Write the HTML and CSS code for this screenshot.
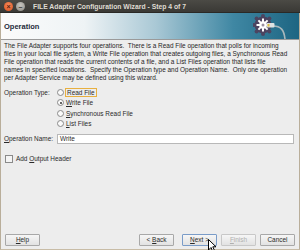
FILE: index.html
```html
<!DOCTYPE html>
<html>
<head>
<meta charset="utf-8">
<link rel="stylesheet" href="styles.css">
</head>
<body>
<div class="titlebar">
  <span class="wbtn close">×</span>
  <span class="wbtn min">–</span>
  <span class="title">FILE Adapter Configuration Wizard - Step 4 of 7</span>
</div>
<div class="window">
  <div class="banner">
    <span class="heading">Operation</span>
    <svg class="logo" width="36" height="26" viewBox="0 0 36 26">
      <path d="M20 13 C28 13 31 17 32 26" stroke="#aab8bc" stroke-width="1.6" fill="none"/>
      <g fill="#4c4460">
        <circle cx="10" cy="12" r="8.5"/>
        <circle cx="10" cy="3" r="2"/>
        <circle cx="10" cy="21" r="2"/>
        <circle cx="1" cy="12" r="2"/>
        <circle cx="3.6" cy="5.6" r="2"/>
        <circle cx="16.4" cy="5.6" r="2"/>
        <circle cx="3.6" cy="18.4" r="2"/>
        <circle cx="16.4" cy="18.4" r="2"/>
      </g>
      <g fill="#ffffff">
        <circle cx="10" cy="12" r="3.8"/>
        <rect x="9" y="5.5" width="2" height="13"/>
        <rect x="3.5" y="11" width="13" height="2"/>
        <rect x="9" y="5.5" width="2" height="13" transform="rotate(45 10 12)"/>
        <rect x="9" y="5.5" width="2" height="13" transform="rotate(-45 10 12)"/>
      </g>
      <circle cx="10" cy="12" r="1.5" fill="#9a90a0"/>
      <rect x="13.5" y="10" width="8" height="4.5" rx="1" fill="#dfe3e3"/>
      <rect x="14.5" y="11" width="2" height="2.5" fill="#e0c040"/>
    </svg>
  </div>
  <div class="content">
    <p class="intro">The File Adapter supports four operations.&nbsp; There is a Read File operation that polls for incoming<br>files in your local file system, a Write File operation that creates outgoing files, a Synchronous Read<br>File operation that reads the current contents of a file, and a List Files operation that lists file<br>names in specified locations.&nbsp; Specify the Operation type and Operation Name.&nbsp; Only one operation<br>per Adapter Service may be defined using this wizard.</p>
    <div class="optype">
      <span class="label">Operation Type:</span>
      <div class="radios">
        <div class="radio"><span class="dot"></span><span class="focus"><u>R</u>ead File</span></div>
        <div class="radio"><span class="dot on"></span><span><u>W</u>rite File</span></div>
        <div class="radio"><span class="dot"></span><span><u>S</u>ynchronous Read File</span></div>
        <div class="radio"><span class="dot"></span><span><u>L</u>ist Files</span></div>
      </div>
    </div>
    <div class="opname">
      <span class="label"><u>O</u>peration Name:</span>
      <div class="field">Write</div>
    </div>
    <div class="check"><span class="box"></span><span>Add <u>O</u>utput Header</span></div>
  </div>
  <div class="buttons">
    <span class="btn"><u>H</u>elp</span>
    <span class="spacer"></span>
    <span class="btn">&lt; <u>B</u>ack</span>
    <span class="btn next"><u>N</u>ext &gt;</span>
    <span class="btn dis"><u>F</u>inish</span>
    <span class="btn">Cancel</span>
  </div>
  <svg class="cursor" width="10" height="14" viewBox="0 0 10 14">
    <path d="M0.5 0.5 L0.5 11 L3 8.5 L5 13 L6.8 12.2 L4.8 7.8 L8 7.8 Z" fill="#ffffff" stroke="#000000" stroke-width="1" stroke-linejoin="round"/>
  </svg>
</div>
</body>
</html>
```
FILE: styles.css
```css
html, body {
  margin: 0;
  padding: 0;
}
body {
  width: 300px;
  height: 250px;
  overflow: hidden;
  background: #ededed;
  font-family: "Liberation Sans", "DejaVu Sans", sans-serif;
  font-size: 6.45px;
  color: #2a2a2a;
}
.titlebar {
  height: 12px;
  background: linear-gradient(#4b4a45, #3a3935);
  display: flex;
  align-items: center;
  gap: 3px;
  padding-left: 3px;
  border-bottom: 1px solid #2a2926;
}
.wbtn {
  width: 9px;
  height: 9px;
  border-radius: 50%;
  font-size: 7px;
  line-height: 9px;
  text-align: center;
  font-weight: bold;
}
.close {
  background: radial-gradient(circle at 50% 35%, #f58a5a, #d8501e);
  color: #5a2010;
  margin-left: 1px;
}
.min {
  background: radial-gradient(circle at 50% 35%, #c8c6c0, #8a8882);
  color: #3a3935;
  margin-right: 5px;
}
.title {
  color: #dfdbd2;
  font-weight: bold;
  font-size: 6.8px;
}
.window {
  position: relative;
  height: 236px;
  border-left: 1px solid #b9ae9a;
  border-right: 1px solid #b9ae9a;
  border-bottom: 1px solid #c8bca6;
  display: flex;
  flex-direction: column;
}
.banner {
  height: 26px;
  background: linear-gradient(90deg, #fbfbfb 0%, #eef3f5 28%, #a9c8d5 52%, #3f87a3 78%, #1d6582 100%);
  display: flex;
  align-items: center;
  justify-content: space-between;
  border-bottom: 1px solid #9a9a9a;
  padding-left: 3px;
}
.heading {
  font-weight: bold;
  font-size: 7.5px;
  color: #1e2a3a;
}
.logo {
  margin-right: 10px;
}
.content {
  flex: 1;
  padding: 2px 5px 0 3px;
}
.intro {
  margin: 0;
  line-height: 8px;
  white-space: nowrap;
  color: #262626;
}
.optype {
  display: flex;
  margin-top: 6px;
}
.label {
  width: 53px;
  flex: none;
  white-space: nowrap;
}
.optype .label {
  margin-top: 1px;
}
.radios {
  display: flex;
  flex-direction: column;
  gap: 2.5px;
}
.radio {
  display: flex;
  align-items: center;
  height: 8px;
  gap: 2px;
  white-space: nowrap;
}
.dot {
  width: 7px;
  height: 7px;
  border: 1px solid #8a8a8a;
  border-radius: 50%;
  background: #fafafa;
  box-sizing: border-box;
  position: relative;
}
.dot.on::after {
  content: "";
  position: absolute;
  left: 1.5px;
  top: 1.5px;
  width: 2px;
  height: 2px;
  border-radius: 50%;
  background: #333;
}
.focus {
  outline: 1px solid #e8b040;
  padding: 0 1px;
}
.opname {
  display: flex;
  align-items: center;
  margin-top: 6px;
}
.field {
  flex: 1;
  height: 8px;
  border: 1px solid #b8b8b8;
  background: #ffffff;
  line-height: 8px;
  padding-left: 2px;
}
.check {
  display: flex;
  align-items: center;
  gap: 3px;
  margin-top: 11px;
  margin-left: 1px;
}
.box {
  width: 6px;
  height: 6px;
  border: 1px solid #8a8a8a;
  background: #f4f4f4;
}
.buttons {
  display: flex;
  align-items: center;
  padding: 0 4px 3px 4px;
  gap: 4px;
}
.spacer {
  flex: 1;
}
.btn {
  width: 33px;
  height: 10px;
  border: 1px solid #a8a8a8;
  background: linear-gradient(#f6f6f6, #e2e2e2);
  text-align: center;
  line-height: 10px;
  border-radius: 1px;
}
.next {
  border-color: #7a9cc8;
  margin-left: 4px;
}
.dis {
  color: #b0b0b0;
  border-color: #c8c8c8;
}
.cursor {
  position: absolute;
  left: 207px;
  top: 226px;
}
```
